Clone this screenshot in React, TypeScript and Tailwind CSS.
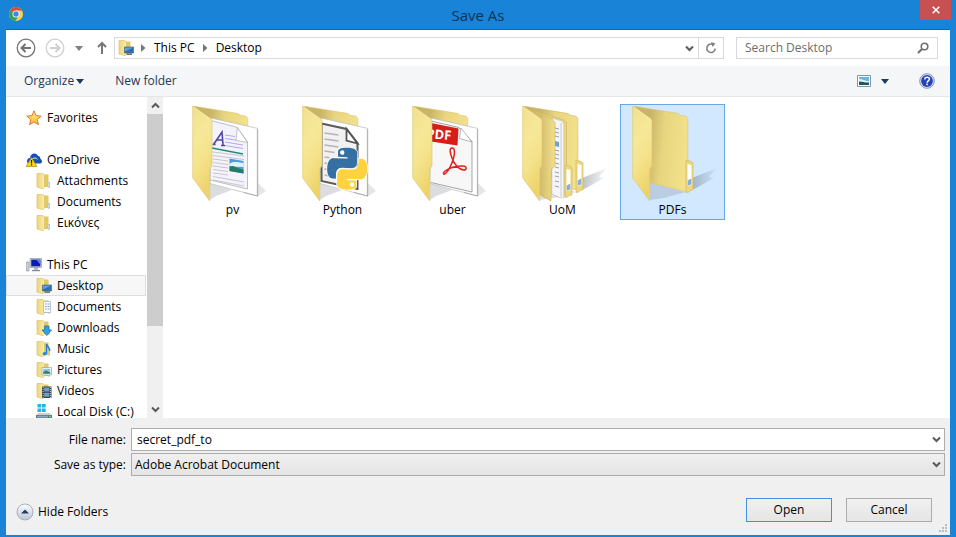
import { ReactNode, useState } from "react";

type IconName =
  | "star" | "onedrive" | "folder" | "pc" | "desktop" | "documents"
  | "downloads" | "music" | "pictures" | "videos" | "disk";

function SmallFolder({ children }: { children?: ReactNode }) {
  return (
    <>
      <path d="M7 1.500h5.500v12.500H7z" fill="#e2c968" />
      <path d="M12.500 9h1.200v5.500l-1.200.5z" fill="#d5b851" />
      <path d="M1 .5h5.500l1.500 1v13.500l-1 .8L1 14z" fill="url(#smallFront)" stroke="#d9be5e" strokeWidth=".6" />
      <path d="M7.600 2v12.600" stroke="#fff3b8" strokeWidth=".8" />
      {children}
    </>
  );
}

function SmallIcon({ name }: { name: IconName }) {
  return (
    <svg viewBox="0 0 16 16" className="size-4 shrink-0" aria-hidden="true">
      {name === "star" && (
        <path d="M8 .8l2 4.900 5.200.4-4 3.400 1.300 5.200L8 11.900l-4.500 2.800 1.300-5.200-4-3.400L6 5.700z" fill="url(#starFill)" stroke="#e07a2a" strokeWidth="1" strokeLinejoin="round" />
      )}
      {name === "onedrive" && (
        <>
          <path d="M1 9.500c0-2 1-3.500 3-3.500C4.500 3 6 1.500 8.300 1.500c2 0 3.200 1 3.700 2.500 1.700 0 2.500 1.300 2.300 2.700 1 .5 1.700 1.300 1.700 2.500 0 1.300-.8 2.300-2 2.300H3c-1.200 0-2-1-2-2z" fill="#1550b5" />
          <path d="M5 10.500c0-3 1.500-4.500 4-4.500 1 0 2 .5 2.500 1.300" fill="none" stroke="#fff" strokeWidth=".9" />
          <path d="M5.500 5.500L11 14.500H0z" fill="#f6d512" stroke="#a98f16" strokeWidth=".7" strokeLinejoin="round" />
          <path d="M5.500 8v3.400M5.500 12.300v1.200" stroke="#222" strokeWidth="1.200" />
        </>
      )}
      {name === "folder" && (
        <SmallFolder>
          <path d="M12 9.500h1.600v4.500H12z" fill="#dcebf5" stroke="#9fb6bd" strokeWidth=".5" />
        </SmallFolder>
      )}
      {name === "pc" && (
        <>
          <path d="M.6 5h2.400v9H.6z" fill="#d4d8de" stroke="#7e8794" strokeWidth=".6" />
          <path d="M4 1.500h11.500v9H4z" fill="#d5dae2" stroke="#828b9a" strokeWidth=".6" />
          <path d="M5.200 2.600h9.200v6.800H5.200z" fill="#0c1fa8" />
          <path d="M10 2.600h4.400v5z" fill="#5b83ee" />
          <path d="M8.500 10.800h3l.8 2H7.500z" fill="#aab1bc" />
          <path d="M6 13h8v1.200H6z" fill="#808998" />
        </>
      )}
      {name === "desktop" && (
        <SmallFolder>
          <path d="M6.500 7h9v6h-9z" fill="#2c6eb8" stroke="#53677c" strokeWidth=".7" />
          <path d="M7 7.500h8L7 11.500z" fill="#5c9fda" />
          <path d="M8.500 13.500H14V15H8.500z" fill="#6b7885" />
        </SmallFolder>
      )}
      {name === "documents" && (
        <SmallFolder>
          <path d="M7.500 2.500h7v11h-7z" fill="#fff" stroke="#9aaec0" strokeWidth=".7" />
          <path d="M9 5h1.800M9 7.500h1.800M9 10h1.800M11.500 5h2M11.500 7.500h2M11.500 10h2" stroke="#6c9bc8" strokeWidth=".9" />
        </SmallFolder>
      )}
      {name === "downloads" && (
        <SmallFolder>
          <path d="M8.500 6H13v4h2.500L10.800 15.500 6 10h2.500z" fill="#36a1e2" stroke="#1873ae" strokeWidth=".8" />
        </SmallFolder>
      )}
      {name === "music" && (
        <SmallFolder>
          <path d="M10.500 3c.5 2.500 3.600 3.300 3 7" fill="none" stroke="#2780cc" strokeWidth="1.600" />
          <path d="M10.500 3v9.500" stroke="#2780cc" strokeWidth="1.300" />
          <ellipse cx="8.800" cy="12.800" rx="2.200" ry="1.700" fill="#2b8bd8" />
        </SmallFolder>
      )}
      {name === "pictures" && (
        <SmallFolder>
          <path d="M6 5.500h9.500V13H6z" fill="#fff" stroke="#8ba0ae" strokeWidth=".7" />
          <path d="M7.200 6.700h7.100v5.100H7.200z" fill="#8cc8ea" />
          <path d="M7.200 10l3-1.500 4.100 2v1.300H7.200z" fill="#39806e" />
        </SmallFolder>
      )}
      {name === "videos" && (
        <SmallFolder>
          <path d="M6 3.500h9.500V15H6z" fill="#3c4249" />
          <path d="M8.200 4.500h5.100v4H8.200zM8.200 9.800h5.100v4H8.200z" fill="#6d9fc8" />
          <path d="M7.100 4v11M14.400 4v11" stroke="#e6e9ec" strokeWidth=".9" strokeDasharray="1 1" />
        </SmallFolder>
      )}
      {name === "disk" && (
        <>
          <path d="M1.500 0h3.700v3.600H1.500zM6 0h3.700v3.600H6zM1.500 4.400h3.700V8H1.500zM6 4.400h3.700V8H6z" fill="#20b4ea" />
          <path d="M2 9h12l2 3H0z" fill="#c6d0d8" />
          <path d="M0 11h16v4H0z" fill="#5a7888" />
          <path d="M1 11.800h11v1.700H1z" fill="#8aa7b4" />
          <path d="M13 11.800h2v1.400h-2z" fill="#5fe05a" />
        </>
      )}
    </svg>
  );
}

type FolderKind = "doc" | "python" | "pdf" | "stack" | "plain";

const BACK_PANEL = "M8.700 0L54 7.500l2 1.700 6 1 1.800 2.300V86L26 77z";

function SideTab({ x, y }: { x: number; y: number }) {
  return (
    <g transform={`translate(${x} ${y})`}>
      <path d="M-2 0l5.500 1.500L5 3v27l-3 .5-1 1.500-3 .5z" fill="#ecd67f" stroke="#d0b65c" strokeWidth=".6" />
      <path d="M-.5 4l4 1v20l-4 1z" fill="#fff" />
      <path d="M-.3 20.500l3.600-2v6l-3.600 1z" fill="#84aedd" />
    </g>
  );
}

function FolderArt({ kind }: { kind: FolderKind }) {
  const hasPage = kind === "doc" || kind === "python" || kind === "pdf";
  return (
    <svg viewBox="1 0 96 96" className="size-24" aria-hidden="true">
      {hasPage ? (
        <>
          <path d="M73 91l9-6-9-9z" fill="#5d6670" fillOpacity=".16" />
          <path d="M26 94V77.500l22 6.500-16 6z" fill="#5d6670" fillOpacity=".22" />
        </>
      ) : (
        <>
          <path d="M68 84V72l25-10-8 9 5 1-16 9z" fill="url(#shadow)" />
          <path d="M26 94V77l36 9-22 6z" fill="#5d6670" fillOpacity=".2" />
        </>
      )}
      {hasPage && (
        <>
          <path d="M8.700 0L54 7.500l2 1.700 6 1 1.800 2.300V40L26 50z" fill="url(#folderBack)" stroke="#dcc368" strokeWidth=".6" />
          <path d="M27 12l46.300 10.300V90L26 77.500z" fill="#fff" stroke="#b9b9b9" strokeWidth=".7" />
          <path d="M73.700 23v67L60 86.500" fill="none" stroke="#9b9b9b" strokeWidth=".7" />
        </>
      )}
      {kind === "doc" && (
        <>
          <path d="M27 14.500l26 6.800 10.500 14.500V83L26 74z" fill="#f4f2fa" stroke="#b0adba" strokeWidth=".8" />
          <path d="M53.300 21.500l-1.300 13 11.500 2z" fill="#fff" stroke="#aaa" strokeWidth=".7" />
          <path d="M41 29l10 1.500M41 32.500l11 1.600M41 36l18 3M41 39.500l18 3" stroke="#a5a0f0" strokeWidth=".9" />
          <path d="M29 46l31 4M29 49.500l31 4M29 53l15 2M29 56.500l15 2M29 60l15 2M29 63.500l15 2M29 67l15 2M29 70.500l31 5.500M29 74l31 6" stroke="#bdb9c5" strokeWidth=".8" />
          <path d="M28 42l31 6" stroke="#238c78" strokeWidth="1.400" />
          <path d="M28.500 38.500h3M29.500 38.500L38 26l1 13M32 34h7M37 39.500h4" fill="none" stroke="#5145a8" strokeWidth="1.600" />
          <path d="M45.500 52.500l14 2.500v12.500l-14-2.500z" fill="#4a9ee1" />
          <path d="M45.500 58c3-3 7-2 14-1v4l-14-.5z" fill="#dff4ff" />
          <path d="M45.500 60.500c4-2 7 2 14 3v4l-14-2.500z" fill="#247b67" />
        </>
      )}
      {kind === "python" && (
        <>
          <path d="M27.500 17.500l25 5.500 11 14v46l-36-8z" fill="#f1f1f1" stroke="#5b5b5b" strokeWidth="2" />
          <path d="M52.500 23v11.500l11 3z" fill="#fff" stroke="#555" strokeWidth="1.800" />
          <path d="M30.500 27l14 2M30.500 33l14 2M30.500 39l14 2M30.500 45l10 1.500M30.500 51l5 .8M30.500 57l5 .8M30.500 63l8 1M30.500 69l12 2" stroke="#b4b4b4" strokeWidth="1.600" />
          <g transform="translate(34 41) rotate(2) scale(1.660 1.750)">
            <path stroke="#fff" strokeWidth=".8" paintOrder="stroke" fill="#3470a3" d="M14.250.18l.9.2.73.26.59.3.45.32.34.34.25.34.16.33.1.3.04.26.02.2-.01.13V8.500l-.05.63-.13.55-.21.46-.26.38-.3.31-.33.25-.35.19-.35.14-.33.1-.3.07-.26.04-.21.02H8.770l-.69.05-.59.14-.5.22-.41.27-.33.32-.27.35-.2.36-.15.37-.1.35-.07.32-.04.27-.02.21v3.060H3.170l-.21-.03-.28-.07-.32-.12-.35-.18-.36-.26-.36-.36-.35-.46-.32-.59-.28-.73-.21-.88-.14-1.050-.05-1.230.06-1.220.16-1.040.24-.87.32-.71.36-.57.4-.44.42-.33.42-.24.4-.16.36-.1.32-.05.24-.01h.16l.06.01h8.160v-.83H6.180l-.01-2.750-.02-.37.05-.34.11-.31.17-.28.25-.26.31-.23.38-.2.44-.18.51-.15.58-.12.64-.1.71-.06.77-.04.84-.02 1.270.05z" />
            <path stroke="#fff" strokeWidth=".8" paintOrder="stroke" fill="#ffd340" d="M21.040 6.110l.28.06.32.12.35.18.36.27.36.35.35.47.32.59.28.73.21.88.14 1.040.05 1.230-.06 1.230-.16 1.040-.24.86-.32.71-.36.57-.4.45-.42.33-.42.24-.4.16-.36.09-.32.05-.24.02-.16-.01h-8.220v.82h5.840l.01 2.760.02.36-.05.34-.11.31-.17.29-.25.25-.31.24-.38.2-.44.17-.51.15-.58.13-.64.09-.71.07-.77.04-.84.01-1.270-.04-1.070-.14-.9-.2-.73-.25-.59-.3-.45-.33-.34-.34-.25-.34-.16-.33-.1-.3-.04-.25-.02-.2.01-.13v-5.340l.05-.64.13-.54.21-.46.26-.38.3-.32.33-.24.35-.2.35-.14.33-.1.3-.06.26-.04.21-.02.13-.01h5.840l.69-.05.59-.14.5-.21.41-.28.33-.32.27-.35.2-.36.15-.36.1-.35.07-.32.04-.28.02-.21V6.070h2.090z" />
            <circle cx="8.700" cy="2.900" r="1.300" fill="#fff" />
            <circle cx="15.300" cy="21" r="1.300" fill="#fff" />
          </g>
        </>
      )}
      {kind === "pdf" && (
        <>
          <path d="M27 15l28 6.500 13 14V86l-41-9.500" fill="#f7f7f7" stroke="#8d8d8d" strokeWidth=".8" />
          <path d="M57 22l-1.500 10.500L68 36z" fill="#fff" stroke="#999" strokeWidth=".7" />
          <path d="M27 17l27.500 5.500L53.500 39.500 27 35.500z" fill="#d61d17" />
          <text x="22" y="32" fontSize="13" fontWeight="700" fill="#fff" transform="rotate(5 22 32)">PDF</text>
          <path d="M48 42c-3 0-2 5 0 10 2 6 7 12 12 12 3 0 3-4-1-4-7 0-14 2-18 5-3 3-1 4 1 2 5-5 10-19 8-24-.5-1-1.300-1-2-1z" fill="none" stroke="#e0221c" strokeWidth="1.500" />
        </>
      )}
      {kind === "stack" && (
        <>
          <path d="M8.700 0L54 7.500l2 1.700 6 1 1.800 2.300V84L50 81z" fill="url(#folderBack)" stroke="#cfb55c" strokeWidth=".6" />
          <SideTab x={64} y={54} />
          <path d="M20 5l30 9 2.500 3v73l-10 1z" fill="#ead680" stroke="#cdb45c" strokeWidth=".6" />
          <SideTab x={53} y={59} />
          <path d="M38 12l10 3 1.800 3v73.500l-3 .5-9-4z" fill="#f5f5f7" stroke="#b9bac2" strokeWidth=".6" />
          <path d="M47 17v74" stroke="#c8ccd4" strokeWidth="1" />
          <path d="M41 22l4 1M41 26l4 1M41 30l4 1M41 44l4 1M41 48l4 1M41 52l4 1M41 57l4 1M41 61l4 1M41 66l4 1M41 70l4 1M41 75l4 1M41 80l4 1" stroke="#9b9fa8" strokeWidth="1" />
          <path d="M41 35l4 1v5l-4-1z" fill="#69a2d2" />
          <path d="M12 2l25.500 10.500L41 16.500V60l-3.500 3-.5 32-11-6z" fill="url(#folderMiddle)" stroke="#ccb257" strokeWidth=".6" />
        </>
      )}
      {kind === "plain" && (
        <>
          <path d={BACK_PANEL} fill="url(#folderBack)" stroke="#dcc368" strokeWidth=".6" />
          <SideTab x={64} y={54} />
        </>
      )}
      <path d="M8.700 0l18.600 13 .7 1.500V60l-2 2.500L25.700 95 8.700 72z" fill="url(#folderFront)" stroke="#dcc56c" strokeWidth=".6" strokeLinejoin="round" />
      <path d="M9 .5l18 13" stroke="#f8edb4" strokeWidth=".7" />
    </svg>
  );
}

function Gradients() {
  return (
    <svg className="absolute size-0" aria-hidden="true">
      <defs>
        <linearGradient id="folderFront" x1="0" y1="0" x2=".3" y2="1">
          <stop offset="0" stopColor="#f1e08e" />
          <stop offset=".4" stopColor="#f6e898" />
          <stop offset=".65" stopColor="#f5e38c" />
          <stop offset="1" stopColor="#edd36b" />
        </linearGradient>
        <linearGradient id="folderBack" x1="0" y1="0" x2="1" y2=".15">
          <stop offset=".33" stopColor="#c9b468" />
          <stop offset=".6" stopColor="#e8d57f" />
          <stop offset="1" stopColor="#f3e08a" />
        </linearGradient>
        <linearGradient id="folderMiddle">
          <stop offset=".5" stopColor="#d3bd6c" />
          <stop offset="1" stopColor="#f1df8b" />
        </linearGradient>
        <linearGradient id="shadow">
          <stop offset="0" stopColor="#5d6670" stopOpacity=".4" />
          <stop offset="1" stopColor="#5d6670" stopOpacity=".04" />
        </linearGradient>
        <linearGradient id="smallFront">
          <stop offset="0" stopColor="#ecd67c" />
          <stop offset="1" stopColor="#f9eaa4" />
        </linearGradient>
        <linearGradient id="starFill" x2="0" y2="1">
          <stop offset="0" stopColor="#fff0a0" />
          <stop offset="1" stopColor="#ffb52d" />
        </linearGradient>
        <linearGradient id="roundFill" x2="0" y2="1">
          <stop offset="0" stopColor="#fff" />
          <stop offset="1" stopColor="#b8c6d8" />
        </linearGradient>
      </defs>
    </svg>
  );
}

function Chevron({ up = false }: { up?: boolean }) {
  return (
    <svg viewBox="0 0 9 7" className="h-[7px] w-[9px]" aria-hidden="true">
      <path d={up ? "M1 5.500l3.500-3.500L8 5.500" : "M1 1.500L4.500 5 8 1.500"} fill="none" stroke="#5a5a5a" strokeWidth="2" />
    </svg>
  );
}

function Caret({ className }: { className: string }) {
  return (
    <svg viewBox="0 0 8 5" className={`h-[5px] w-2 ${className}`} aria-hidden="true">
      <path d="M0 0h8L4 5z" fill="currentColor" />
    </svg>
  );
}

function Crumb({ children }: { children: string }) {
  return (
    <>
      <svg viewBox="0 0 5 8" className="h-2 w-[5px] shrink-0" aria-hidden="true">
        <path d="M0 0l4.500 4L0 8z" fill="#777" />
      </svg>
      <button type="button" className="mx-2 whitespace-nowrap">{children}</button>
    </>
  );
}

type Entry = { label: string; icon: IconName; child?: boolean };

const groups: { title: string; entries: Entry[] }[] = [
  { title: "Favorites", entries: [{ label: "Favorites", icon: "star" }] },
  {
    title: "OneDrive",
    entries: [
      { label: "OneDrive", icon: "onedrive" },
      { label: "Attachments", icon: "folder", child: true },
      { label: "Documents", icon: "folder", child: true },
      { label: "Εικόνες", icon: "folder", child: true },
    ],
  },
  {
    title: "This PC",
    entries: [
      { label: "This PC", icon: "pc" },
      { label: "Desktop", icon: "desktop", child: true },
      { label: "Documents", icon: "documents", child: true },
      { label: "Downloads", icon: "downloads", child: true },
      { label: "Music", icon: "music", child: true },
      { label: "Pictures", icon: "pictures", child: true },
      { label: "Videos", icon: "videos", child: true },
      { label: "Local Disk (C:)", icon: "disk", child: true },
    ],
  },
];

const folders: { name: string; kind: FolderKind }[] = [
  { name: "pv", kind: "doc" },
  { name: "Python", kind: "python" },
  { name: "uber", kind: "pdf" },
  { name: "UoM", kind: "stack" },
  { name: "PDFs", kind: "plain" },
];

function TitleBar() {
  return (
    <header className="grid h-[29px] shrink-0 grid-cols-[1fr_auto_1fr] items-start">
      <svg viewBox="0 0 16 16" className="mt-[6px] ml-[2px] size-4" aria-hidden="true">
        <circle cx="8" cy="8" r="7" fill="#fbd04b" />
        <path d="M8 8L2 4.400A7 7 0 0 1 14.100 4.600H8z" fill="#e2473b" />
        <path d="M8 8L2 4.400A7 7 0 0 0 7.300 15L11 9.700z" fill="#32a355" />
        <circle cx="8" cy="8" r="3.500" fill="#fff" />
        <circle cx="8" cy="8" r="2.700" fill="#3f86ec" />
      </svg>
      <h1 className="self-center text-[15px] leading-5 text-[#0b3558]">Save As</h1>
      <button type="button" aria-label="Close" className="-mr-px flex h-5 w-[31px] items-center justify-center justify-self-end bg-[#c75050]">
        <svg viewBox="0 0 8 8" className="size-2" aria-hidden="true">
          <path d="M.7.7l6.600 6.600M7.300.7L.7 7.300" stroke="#fff" strokeWidth="1.600" />
        </svg>
      </button>
    </header>
  );
}

function AddressRow() {
  return (
    <div className="flex h-9 shrink-0 items-center pr-3 pl-[10px]">
      <button type="button" aria-label="Back">
        <svg viewBox="0 0 20 20" className="size-5" fill="none" stroke="#747474" aria-hidden="true">
          <circle cx="10" cy="10" r="8.800" strokeWidth="1.300" />
          <path d="M15 10H6M9.500 6l-4 4 4 4" strokeWidth="2" />
        </svg>
      </button>
      <button type="button" aria-label="Forward" className="ml-[9px]">
        <svg viewBox="0 0 20 20" className="size-5" fill="none" stroke="#cfcfcf" aria-hidden="true">
          <circle cx="10" cy="10" r="8.800" strokeWidth="1.300" />
          <path d="M5 10h9M10.500 6l4 4-4 4" strokeWidth="2" />
        </svg>
      </button>
      <button type="button" aria-label="Recent locations" className="ml-[10px]">
        <Caret className="text-[#808080]" />
      </button>
      <button type="button" aria-label="Up" className="ml-3">
        <svg viewBox="0 0 14 14" className="size-[14px]" fill="none" stroke="#777" strokeWidth="2" aria-hidden="true">
          <path d="M7 13V2M3 6l4-4 4 4" />
        </svg>
      </button>
      <nav aria-label="Address" className="ml-[5px] flex h-[22px] flex-1 items-center border border-[#d9d9d9] pl-[3px]">
        <SmallIcon name="desktop" />
        <span className="w-[7px]" />
        <Crumb>This PC</Crumb>
        <Crumb>Desktop</Crumb>
        <button type="button" aria-label="Previous locations" className="mr-1 ml-auto"><Chevron /></button>
        <button type="button" aria-label="Refresh" className="flex h-full w-[25px] items-center justify-center border-l border-[#d9d9d9]">
          <svg viewBox="0 0 12 12" className="size-3" aria-hidden="true">
            <path d="M7 2.200A4.200 4.200 0 1 0 10.200 6.500" fill="none" stroke="#808080" strokeWidth="1.600" />
            <path d="M6 0l4.500 1.500L7.500 5z" fill="#808080" />
          </svg>
        </button>
      </nav>
      <div className="ml-3 flex h-[22px] w-[202px] items-center border border-[#d9d9d9] px-2">
        <input type="text" aria-label="Search Desktop" placeholder="Search Desktop" className="min-w-0 flex-1 bg-transparent outline-none placeholder:text-[#6d6d6d]" />
        <svg viewBox="0 0 12 12" className="size-3" fill="none" stroke="#707070" aria-hidden="true">
          <circle cx="7.500" cy="4.500" r="3.300" strokeWidth="1.600" />
          <path d="M5 7L1 11" strokeWidth="2.200" />
        </svg>
      </div>
    </div>
  );
}

function Toolbar() {
  return (
    <div className="flex h-[31px] shrink-0 items-center border-b border-[#e4e6e8] bg-[#f5f6f7] pr-[15px] pl-[18px] text-[#1e395b]">
      <button type="button" className="flex items-center gap-[2px]">Organize <Caret className="text-[#1e395b]" /></button>
      <button type="button" className="ml-[31px]">New folder</button>
      <button type="button" aria-label="Change view" className="ml-auto">
        <svg viewBox="0 0 14 12" className="h-3 w-[14px]" aria-hidden="true">
          <path d="M.5.5h13v11H.5z" fill="#fff" stroke="#7798b2" />
          <path d="M2 2h10v8H2z" fill="#6ab5e4" />
          <path d="M2 4c4 0 5 2 10 2v2H2z" fill="#d9f0f8" />
          <path d="M2 6.500c4 0 6 1.500 10 1V10H2z" fill="#1f5758" />
        </svg>
      </button>
      <button type="button" aria-label="View options" className="ml-[10px]"><Caret className="text-[#1e395b]" /></button>
      <button type="button" aria-label="Help" className="ml-[30px]">
        <svg viewBox="0 0 16 16" className="size-4" aria-hidden="true">
          <circle cx="8" cy="8" r="7.300" fill="#dfe5f5" stroke="#6c7bb0" strokeWidth=".8" />
          <circle cx="8" cy="8" r="5.900" fill="#2443b6" />
          <path d="M5.800 6.500c0-3 4.600-2.800 4.600-.2 0 1.500-2.200 1.700-2.300 3.300M8.100 10.600v1.600" fill="none" stroke="#fff" strokeWidth="1.500" />
        </svg>
      </button>
    </div>
  );
}

function Sidebar() {
  return (
    <aside className="flex w-[157px] shrink-0">
      <nav aria-label="Folders" className="flex min-w-0 flex-1 flex-col gap-[21px] overflow-hidden pt-[10px] pr-px">
        {groups.map((group) => (
          <ul key={group.title}>
            {group.entries.map((entry) => (
              <li key={entry.label}>
                <button
                  type="button"
                  className={`flex h-[21px] w-full items-center border text-left whitespace-nowrap ${
                    entry.child ? "gap-[5px] pl-[29px]" : "gap-[5px] pl-[19px]"
                  } ${entry.icon === "desktop" ? "border-[#dedede] bg-[#f7f7f7]" : "border-transparent"}`}
                >
                  <SmallIcon name={entry.icon} />
                  {entry.label}
                </button>
              </li>
            ))}
          </ul>
        ))}
      </nav>
      <div className="flex w-4 flex-col bg-[#f0f0f0]">
        <button type="button" aria-label="Scroll up" className="flex h-[17px] items-center justify-center"><Chevron up /></button>
        <div className="flex-1"><div className="h-[74%] bg-[#cdcdcd]" /></div>
        <button type="button" aria-label="Scroll down" className="flex h-[17px] items-center justify-center"><Chevron /></button>
      </div>
    </aside>
  );
}

function Footer() {
  const [fileName, setFileName] = useState("secret_pdf_to");
  return (
    <form className="flex shrink-0 flex-col bg-[#f0f0f0] pt-[10px] pr-[5px] pb-[13px]" onSubmit={(e) => e.preventDefault()}>
      <div className="grid grid-cols-[120px_1fr] items-center gap-x-[5px] gap-y-[2px]">
        <label htmlFor="file-name" className="text-right">File name:</label>
        <div className="flex h-[23px] items-center border border-[#abadb3] bg-white pr-[3px] pl-[5px]">
          <input id="file-name" value={fileName} onChange={(e) => setFileName(e.target.value)} className="min-w-0 flex-1 outline-none" />
          <button type="button" aria-label="Previous names"><Chevron /></button>
        </div>
        <label htmlFor="file-type" className="text-right">Save as type:</label>
        <div className="relative h-[23px] border border-[#acacac] bg-linear-to-b from-[#f0f0f0] to-[#e4e4e4]">
          <select id="file-type" className="block h-full w-full appearance-none bg-transparent pl-[3px] outline-none">
            <option>Adobe Acrobat Document</option>
          </select>
          <span className="pointer-events-none absolute inset-y-0 right-[3px] flex items-center"><Chevron /></span>
        </div>
      </div>
      <div className="mt-[22px] flex items-center pr-[13px] pl-[10px]">
        <button type="button" className="mr-auto flex items-center gap-1 pt-1">
          <svg viewBox="0 0 18 18" className="size-[18px]" aria-hidden="true">
            <circle cx="9" cy="9" r="8" fill="url(#roundFill)" stroke="#a5b1c0" />
            <path d="M5 10.500h8L9 6.500z" fill="#263b5c" />
          </svg>
          Hide Folders
        </button>
        <button type="submit" className="h-6 w-[86px] border border-[#3c94e4] bg-linear-to-b from-[#f0f0f0] to-[#e5e5e5]">Open</button>
        <button type="button" className="ml-[14px] h-6 w-[86px] border border-[#acacac] bg-linear-to-b from-[#f0f0f0] to-[#e5e5e5]">Cancel</button>
      </div>
    </form>
  );
}

export default function App() {
  const [selected, setSelected] = useState("PDFs");
  return (
    <div className="flex h-screen flex-col overflow-hidden bg-[#1883d7] px-[6px] pb-[2px] font-['Open_Sans','Noto_Sans',sans-serif] text-xs leading-4 text-black">
      <Gradients />
      <TitleBar />
      <main className="relative flex min-h-0 flex-1 flex-col border-t border-[#1068b0] bg-white">
        <AddressRow />
        <Toolbar />
        <div className="flex min-h-0 flex-1">
          <Sidebar />
          <section aria-label="Files" className="flex flex-1 flex-wrap content-start gap-[5px] pt-[7px] pl-[17px]">
            {folders.map((folder) => (
              <button
                key={folder.name}
                type="button"
                aria-pressed={selected === folder.name}
                onClick={() => setSelected(folder.name)}
                className={`flex h-[116px] w-[105px] flex-col items-center border pt-px ${
                  selected === folder.name ? "border-[#66a7e8] bg-[#d1e8ff]" : "border-transparent"
                }`}
              >
                <FolderArt kind={folder.kind} />
                <span>{folder.name}</span>
              </button>
            ))}
          </section>
        </div>
        <Footer />
        <svg viewBox="0 0 10 10" className="absolute right-[2px] bottom-[2px] size-[10px]" aria-hidden="true">
          <path d="M7 1h2v2H7zM4 4h2v2H4zM7 4h2v2H7zM1 7h2v2H1zM4 7h2v2H4zM7 7h2v2H7z" fill="#bcbcbc" />
        </svg>
      </main>
    </div>
  );
}
